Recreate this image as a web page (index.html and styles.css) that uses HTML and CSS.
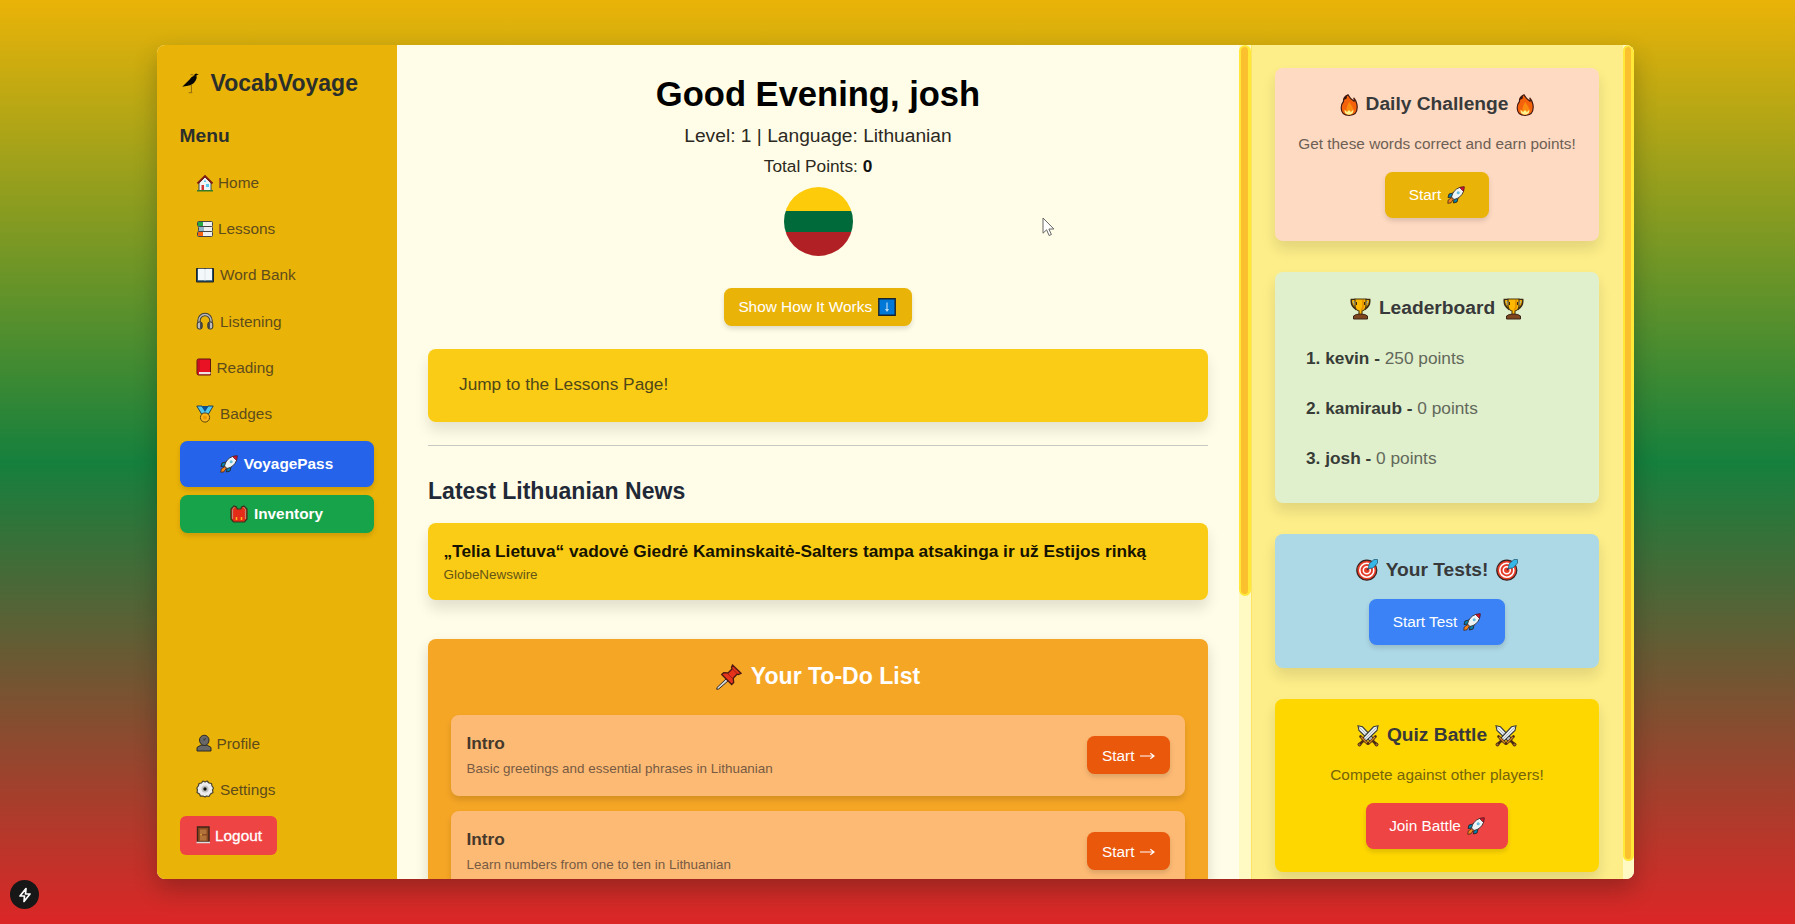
FILE: index.html
```html
<!DOCTYPE html>
<html lang="en">
<head>
<meta charset="utf-8">
<title>VocabVoyage</title>
<link rel="stylesheet" href="styles.css">
</head>
<body>
<svg class="defs" aria-hidden="true">
  <symbol id="bird" viewBox="0 0 18 24"><path d="M0 15 8 7q2-3 5-4 0-2 2-2.500l3 1-2.500 1q1 3-1 6-3 5-8.500 5.500z" fill="#080703"/><path d="M10 12v9m-3 .5h4M13 3q-2-2-4-1" fill="none" stroke="#74540b" stroke-width=".8"/></symbol>
  <symbol id="home" viewBox="0 0 18 18"><path d="M3 9v7.500h12V9L9 3z" fill="#eef4f5" stroke="#3d4a4d"/><path d="M1.500 9.500 9 2l7.500 7.500" fill="none" stroke="#7c1c14" stroke-width="1.800"/><path d="M5.500 11H8v5H5.500z" fill="#d13438"/><path d="M10 10h3v3h-3zM8 6.500h2V8H8z" fill="#57c7ee"/><path d="M1 16.800h16" stroke="#367c26" stroke-width="1.600"/></symbol>
  <symbol id="books" viewBox="0 0 18 18"><rect x="1.500" y="1.500" width="15" height="5" rx="1" fill="#eee" stroke="#444"/><path d="M2 2h5v4H2z" fill="#23a644"/><rect x="2.500" y="6.500" width="14" height="5" rx="1" fill="#eee" stroke="#444"/><path d="M3 7h5v4H3z" fill="#90b4c8"/><rect x="1.500" y="11.500" width="15" height="5" rx="1" fill="#eee" stroke="#444"/><path d="M2 12h5v4H2z" fill="#f7630c"/></symbol>
  <symbol id="open" viewBox="0 0 18 18"><path d="M.5 2.500h17v13.500H.5z" fill="#23506b" stroke="#222"/><path d="M2 2.800h6.500l.5.7.500-.7H16v11.500H9.500l-.5.7-.5-.7H2z" fill="#f3f8fb"/><path d="M9 4v10" stroke="#d5e1e8" stroke-width=".8"/></symbol>
  <symbol id="phones" viewBox="0 0 18 18"><path d="M3 12V8.500a6 6 0 0 1 12 0V12" fill="none" stroke="#413d35" stroke-width="3.400"/><path d="M3 12V8.500a6 6 0 0 1 12 0V12" fill="none" stroke="#bbb" stroke-width="1.400"/><rect x="1.200" y="10" width="5" height="7" rx="2" fill="#bcbcbc" stroke="#333"/><rect x="11.800" y="10" width="5" height="7" rx="2" fill="#bcbcbc" stroke="#333"/><path d="M5 10.500v6M13 10.500v6" stroke="#333" stroke-width="1.600"/></symbol>
  <symbol id="red" viewBox="0 0 18 18"><path d="M2.500 1h12v16h-12q-1.500 0-1.500-2V2.500Q1 1 2.500 1z" fill="#e81224" stroke="#5d1711"/><path d="M3 14h11.500v2.200H3z" fill="#eee4df"/><path d="M3 1.500v12" stroke="#a90e1c"/></symbol>
  <symbol id="medal" viewBox="0 0 18 18"><path d="M.8 1h5.200L9 5l3-4h5.200l-4.700 8h-7z" fill="#50c5ee" stroke="#29434e"/><path d="M5.500 1h7L9 7z" fill="#0b4f90"/><circle cx="9" cy="12.500" r="4.600" fill="#ffb51c" stroke="#5b4510"/><circle cx="9" cy="12.500" r="2" fill="#eb9a05"/></symbol>
  <symbol id="rocket" viewBox="0 0 18 18"><path d="M6 7 2 8 1 11.500l4-.5zM11 12l-1 4-3.500 1 .5-4z" fill="#0087b5" stroke="#252525" stroke-width=".9"/><path d="M5 11.500 1.200 14 .8 17.300 4 16.800 6.500 13z" fill="#f7831c" stroke="#4a2711" stroke-width=".8"/><path d="M4.500 11Q6 4 12.500 1.500L17 1l-.5 4.500Q14 12 7 13.500z" fill="#eef3f6" stroke="#333" stroke-width=".9"/><path d="m12.500 1.500 4.800-.8-.8 4.800z" fill="#d3132b" stroke="#5c1621" stroke-width=".7"/><circle cx="11.200" cy="6.800" r="1.500" fill="#64bede"/></symbol>
  <symbol id="pack" viewBox="0 0 18 18"><path d="M4 1 1 4v10l2.500 3h11L17 14V4l-3-3-2.500 1L10.800 4H7.200L6.500 2z" fill="#e52c18" stroke="#34351e" stroke-width="1.200"/><path d="M4.500 2 2.600 4.500V14M13.500 2l1.900 2.500V14" fill="none" stroke="#b9937c"/><path d="M6.500 12v3M11.500 12v3" stroke="#ffb51c" stroke-width="1.500"/></symbol>
  <symbol id="user" viewBox="0 0 18 18"><path d="M1 17v-3.500l4-2.500h6l4 2.500V17z" fill="#686868" stroke="#2b2922"/><path d="M3.500 6a4.700 4.700 0 0 1 9.500 0c0 3-2 5.500-4.500 5.500S3.500 9 3.500 6z" fill="#686868" stroke="#2b2922"/><path d="M8 4.500v2l2-2.500" fill="none" stroke="#333" stroke-width=".8"/></symbol>
  <symbol id="gear" viewBox="0 0 18 18"><path d="m7 1 2 1 2-1 2 2 2.500.5.5 2.500 1.500 2L16.500 10l.5 2.500-2.500 1.500-1.500 2.500-2.500-.5L9 17l-2-1-2.500.2L3.500 14 1 12.500 1.500 10 .8 8l1.500-2L3 3.500 5.500 3z" fill="#ececec" stroke="#48412b" stroke-width="1.200" stroke-linejoin="round"/><circle cx="9" cy="9" r="3.500" fill="#c2c2c2"/><circle cx="9" cy="9" r="1.700" fill="#16130a"/></symbol>
  <symbol id="door" viewBox="0 0 18 18"><path d="M1.500 1h11.500v15H1.500z" fill="#8e4a20" stroke="#3f2417" stroke-width="1.400"/><path d="M4 3.500h6.500V8H4zM4 9.500h6.500v5H4z" fill="#b27239"/><path d="M.5 16.500h13.500" stroke="#ddd" stroke-width="1.600"/><circle cx="5" cy="8.800" r=".8" fill="#ffc83d"/></symbol>
  <symbol id="down" viewBox="0 0 18 18"><path d="M.8.8h16.400v16.400H.8z" fill="#0078d7" stroke="#17232d" stroke-width="1.400"/><path d="M9 4.500v7M8 11.500l1 1.500 1-1.500z" fill="#b9d9f2" stroke="#b9d9f2" stroke-width="1.200"/></symbol>
  <symbol id="pin" viewBox="0 0 26 26"><path d="m10 15-9 8.500-.3 1.800 2-.3L12 17z" fill="#cfd5d8" stroke="#3b2a1d"/><path d="m16.500 1 8.500 8.300-2.500 1.200-1.500-.3-3.800 4 .5 4.300-2 2-10-10 2-1.800 4.300.3 4-4-.5-1.800z" fill="#e5341b" stroke="#4d1911" stroke-width="1.300"/><path d="m12 10 4.500 4.500M16.500 5l4.500 4.500" stroke="#9f2010"/></symbol>
  <symbol id="fire" viewBox="0 0 18 22"><path d="M8 .8q2 4 6 6.500.5-2-.3-3.500 3.500 4 3.500 9.500 0 8-8 8t-8-7.300q0-4 2.300-6.500Q3 3 8 .8z" fill="#f4620c" stroke="#451b12" stroke-width="1.200"/><path d="M9 8q4 4.500 4.500 8 0 4.700-4.500 4.700T4.300 16.500l1.800.5Q7 11 9 8z" fill="#fb8a10"/><path d="M4.500 15.500 7 18l2-2 2 2 2.500-2.500q0 5.200-4.500 5.200t-4.500-5.200z" fill="#fff18c"/><path d="m7 1.500-3 2-.3 2.500 3-1.500z" fill="#351410"/></symbol>
  <symbol id="cup" viewBox="0 0 20 22"><path d="M5 2H1.300q-.5 6 4.700 9M15 2h3.700q.5 6-4.700 9" fill="none" stroke="#3c2b10" stroke-width="2.600"/><path d="M5 2.500H1.800Q2 8 6 10M15 2.500h3.200Q18 8 14 10" fill="none" stroke="#ffb900" stroke-width="1"/><path d="M4.500 1h11v7q-.5 4-4 5v4h-3v-4q-3.500-1-4-5z" fill="#ffb900" stroke="#4a3410" stroke-width="1.100"/><path d="M12.500 2v7q-.5 2-2 3" stroke="#e08f00" fill="none" stroke-width="1.600"/><path d="M6 4v3M14 4v3" stroke="#3c2b10"/><path d="M3 18q2-2 7-2t7 2v3H3z" fill="#7f451e" stroke="#3b2617"/></symbol>
  <symbol id="target" viewBox="0 0 22 22"><circle cx="10.800" cy="11.200" r="10" fill="#e53c28" stroke="#38221e" stroke-width="1.200"/><circle cx="10.800" cy="11.200" r="7" fill="none" stroke="#fff" stroke-width="1.600"/><circle cx="10.800" cy="11.200" r="3.500" fill="#e53c28" stroke="#fff" stroke-width="1.500"/><path d="m11 11 3-3" stroke="#334" stroke-width="1.200"/><path d="m12.500 9.500.5-4.500 5-4.500h3.500V4L17 9z" fill="#35b7e8" stroke="#26617b" stroke-width=".8"/></symbol>
  <symbol id="swords" viewBox="0 0 22 22"><g id="sword"><path d="M1 .8 5.500 1.800 17 14l-3 3L2 5.500z" fill="#e9eef1" stroke="#383a38" stroke-width="1.100"/><path d="M2 2 15 15" stroke="#a3afb6" stroke-width=".8"/><path d="m11.500 18.500 7-7M16 16l3 3" stroke="#4a2b12" stroke-width="2.600" stroke-linecap="round"/><path d="m12 18 6-6" stroke="#d38424" stroke-width="1.200"/><circle cx="19.500" cy="19.500" r="1.500" fill="#b16d26" stroke="#3f2716"/></g><use href="#sword" transform="translate(22 0) scale(-1 1)"/></symbol>
</svg>

<div class="app">
  <nav class="sidebar">
    <div class="brand"><svg class="bird"><use href="#bird"/></svg><span>VocabVoyage</span></div>
    <h2 class="menu-title">Menu</h2>
    <div class="links">
      <a class="link mid"><svg class="em"><use href="#home"/></svg>Home</a>
      <a class="link mid"><svg class="em"><use href="#books"/></svg>Lessons</a>
      <a class="link"><svg class="em"><use href="#open"/></svg>Word Bank</a>
      <a class="link"><svg class="em"><use href="#phones"/></svg>Listening</a>
      <a class="link slim"><svg class="em"><use href="#red"/></svg>Reading</a>
      <a class="link"><svg class="em"><use href="#medal"/></svg>Badges</a>
      <a class="btn wide tall blue"><svg class="em"><use href="#rocket"/></svg>VoyagePass</a>
      <a class="btn wide green"><svg class="em"><use href="#pack"/></svg>Inventory</a>
    </div>
    <div class="links bottom">
      <a class="link slim"><svg class="em"><use href="#user"/></svg>Profile</a>
      <a class="link"><svg class="em"><use href="#gear"/></svg>Settings</a>
      <a class="link logout"><svg class="em"><use href="#door"/></svg>Logout</a>
    </div>
  </nav>

  <main class="main">
    <header class="hero">
      <h1>Good Evening, josh</h1>
      <p class="level">Level: 1 | Language: Lithuanian</p>
      <p class="points">Total Points: <b>0</b></p>
      <div class="flag"></div>
      <a class="btn how">Show How It Works <svg class="em"><use href="#down"/></svg></a>
    </header>
    <div class="jump">Jump to the Lessons Page!</div>
    <hr>
    <h2 class="news-title">Latest Lithuanian News</h2>
    <article class="news">
      <h3>„Telia Lietuva“ vadovė Giedrė Kaminskaitė-Salters tampa atsakinga ir už Estijos rinką</h3>
      <p>GlobeNewswire</p>
    </article>
    <section class="todo">
      <h2><svg class="pin"><use href="#pin"/></svg>Your To-Do List</h2>
      <div class="task">
        <div><h3>Intro</h3><p>Basic greetings and essential phrases in Lithuanian</p></div>
        <a class="btn go">Start <svg class="arrow" viewBox="0 0 16 10"><path d="M0 5h14.500M11 2l4 3-4 3"/></svg></a>
      </div>
      <div class="task">
        <div><h3>Intro</h3><p>Learn numbers from one to ten in Lithuanian</p></div>
        <a class="btn go">Start <svg class="arrow" viewBox="0 0 16 10"><path d="M0 5h14.500M11 2l4 3-4 3"/></svg></a>
      </div>
    </section>
  </main>
  <div class="track"><div class="thumb half"></div></div>

  <aside class="panel">
    <section class="card peach">
      <h2><svg class="fire"><use href="#fire"/></svg>Daily Challenge<svg class="fire"><use href="#fire"/></svg></h2>
      <p>Get these words correct and earn points!</p>
      <a class="btn tall gold">Start <svg class="em"><use href="#rocket"/></svg></a>
    </section>
    <section class="card mint">
      <h2><svg class="cup"><use href="#cup"/></svg>Leaderboard<svg class="cup"><use href="#cup"/></svg></h2>
      <ol>
        <li><b>1. kevin -</b> 250 points</li>
        <li><b>2. kamiraub -</b> 0 points</li>
        <li><b>3. josh -</b> 0 points</li>
      </ol>
    </section>
    <section class="card sky">
      <h2><svg class="big"><use href="#target"/></svg>Your Tests!<svg class="big"><use href="#target"/></svg></h2>
      <a class="btn tall azure">Start Test <svg class="em"><use href="#rocket"/></svg></a>
    </section>
    <section class="card sun">
      <h2><svg class="big"><use href="#swords"/></svg>Quiz Battle<svg class="big"><use href="#swords"/></svg></h2>
      <p>Compete against other players!</p>
      <a class="btn tall coral">Join Battle <svg class="em"><use href="#rocket"/></svg></a>
    </section>
  </aside>
  <div class="track"><div class="thumb full"></div></div>
</div>

<svg class="cursor" viewBox="0 0 13 20"><path d="M1 1v15.200l3.600-3.400 2.500 5.700 2.300-1-2.500-5.500h5z"/></svg>
<div class="dev"><svg viewBox="0 0 16 16"><path d="M9 1.500 3 9h4.500L7 14.500 13 7H8.500z"/></svg></div>
</body>
</html>
```
FILE: styles.css
```css
* { box-sizing: border-box; margin: 0; padding: 0; }
html { font-size: 15.360px; }
body {
  height: 924px;
  overflow: hidden;
  padding: 45px 161px 45.500px 156.500px;
  background: linear-gradient(#eab308, #15803d 50%, #dc2626);
  font-family: "Liberation Sans", Arial, sans-serif;
  line-height: 1.5;
}
.defs { position: absolute; width: 0; height: 0; }
svg { flex: none; display: block; }
.app {
  display: flex;
  width: 1477.500px;
  height: 833.500px;
  overflow: hidden;
  border-radius: 8px;
  background: #fffde7;
  box-shadow: 0 10px 24px rgba(0, 0, 0, .24);
}

.sidebar {
  flex: 0 0 240.500px;
  display: flex;
  flex-direction: column;
  padding: 22.500px 23px 24px;
  background: #eab308;
  color: #2b2f2c;
}
.brand { display: flex; align-items: center; height: 32px; font-size: 23px; font-weight: 700; }
.bird { width: 17px; height: 22px; margin: 0 12px 0 2px; }
.menu-title { height: 29px; margin: 21px 0 14px; font-size: 19.200px; line-height: 29px; }
.links { display: flex; flex-direction: column; gap: 8px; }
.bottom { margin-top: auto; align-items: flex-start; }
.link {
  display: flex;
  align-items: center;
  height: 38.200px;
  padding: 0 15.300px 0 16px;
  font-size: 1rem;
  color: #5f4c1b;
}
.em { width: 18px; height: 18px; }
.link .em { margin-right: 6.500px; }
.mid .em { margin-right: 4.500px; }
.slim .em { margin-right: 3px; }
.logout { border-radius: 6px; background: #ef4444; color: #fff; -webkit-text-stroke: .3px #fff; }
.logout .em { margin-right: 1.500px; }

.btn {
  display: flex;
  align-items: center;
  justify-content: center;
  gap: 6px;
  width: max-content;
  height: 38px;
  border-radius: 7.500px;
  color: #fff;
  font-size: 1rem;
  box-shadow: 0 3px 5px rgba(0, 0, 0, .13);
  white-space: nowrap;
}
.tall { height: 46px; padding: 0 23.500px; }
.wide { width: 194px; font-weight: 700; }
.blue { background: #2563eb; }
.green { background: #16a34a; }
.how { padding: 0 16px 0 14.500px; background: #eab308; }
.gold { background: #eab308; }
.azure { background: #3b82f6; }
.coral { background: #ef4444; }

.main { flex: 0 0 842px; padding: 23px 31px 0 31px; overflow: hidden; }
.hero { display: flex; flex-direction: column; align-items: center; color: #2b2922; }
.hero h1 { height: 52px; font-size: 34.560px; line-height: 52px; color: #000; }
.level { height: 30px; font-size: 19.200px; line-height: 31px; }
.points { height: 32px; font-size: 17.280px; line-height: 33px; }
.points b { color: #111; }
.flag {
  width: 69px;
  height: 69px;
  margin: 5px 0 31.500px;
  border-radius: 50%;
  background: linear-gradient(#fecb0a 0 34.500%, #006a3a 34.500% 65.500%, #b02025 65.500%);
}
.jump {
  height: 72.500px;
  margin-top: 23.500px;
  padding-left: 31px;
  border-radius: 8px;
  background: #facc15;
  color: #4f4718;
  font-size: 17.280px;
  line-height: 71px;
  box-shadow: 0 9px 14px rgba(0, 0, 0, .1);
}
hr { height: 1.500px; margin: 23px 0 22px; border: 0; background: #c7c8c2; }
.news-title { height: 46px; font-size: 23.040px; line-height: 46px; color: #1f2937; }
.news {
  height: 76.500px;
  margin-top: 9px;
  padding: 14.500px 15.500px;
  border-radius: 8px;
  background: #facc15;
  box-shadow: 0 9px 14px rgba(0, 0, 0, .11);
}
.news h3 { height: 26px; font-size: 17.300px; line-height: 26px; color: #151200; white-space: nowrap; }
.news p { font-size: 13.440px; line-height: 21px; color: #655514; }
.todo {
  height: 300px;
  margin-top: 39px;
  padding: 22px 23px;
  border-radius: 8px;
  background: #f6a625;
  box-shadow: 0 6px 14px rgba(0, 0, 0, .14);
}
.todo h2 { display: flex; align-items: center; justify-content: center; gap: 9px; height: 32px; margin-bottom: 22.500px; font-size: 23.040px; color: #fff; }
.pin { width: 26px; height: 26px; }
.task {
  display: flex;
  align-items: center;
  justify-content: space-between;
  height: 80.700px;
  margin-bottom: 15.300px;
  padding: 0 15.500px;
  border-radius: 8px;
  background: #fdba74;
  box-shadow: 0 4px 6px rgba(0, 0, 0, .13);
}
.task h3 { height: 27px; font-size: 17.280px; line-height: 26px; color: #46382a; }
.task p { font-size: 13.440px; line-height: 23px; color: #775a43; }
.go { gap: 5px; padding: 0 15px; background: #ea580c; }
.arrow { width: 15px; height: 10px; margin-top: 2px; fill: none; stroke: #fff; stroke-width: 1.200; }

.track { flex: 0 0 11.500px; background: #fff9c4; }
.thumb { border: 2.500px solid #ffe838; border-radius: 6px; background: #fbc02d; border-right-width: 3px; }
.half { height: 551px; }
.full { height: 816px; }

.panel { flex: 1; height: 100%; overflow: hidden; padding: 23px 23.500px 0 23.500px; border-left: 1px solid #fbe464; background: #fdee89; }
.card {
  display: flex;
  flex-direction: column;
  align-items: center;
  height: 173px;
  margin-bottom: 31px;
  padding-top: 22px;
  border-radius: 8px;
  box-shadow: 0 8px 14px rgba(0, 0, 0, .11);
}
.card h2 { display: flex; align-items: center; gap: 8px; height: 29px; font-size: 19.200px; color: #38393a; }
.card p { height: 52.500px; font-size: 1rem; line-height: 50px; color: #6d5f55; }
.peach { background: #fedac2; }
.mint { height: 230.500px; background: #e1f0cc; }
.sky { height: 134.500px; background: #add8e6; }
.sky h2 { margin-bottom: 14px; }
.sun { margin-bottom: 0; background: #ffd700; }
.sun p { color: #75640b; }
.fire { width: 18px; height: 22px; }
.cup { width: 21px; height: 22px; }
.big { width: 22px; height: 22px; }
.card ol { align-self: stretch; padding: 10px 31px; list-style: none; }
.card li { height: 50px; font-size: 17.280px; line-height: 50px; color: #62685b; }
.card li b { color: #373c37; }

.cursor { position: absolute; left: 1042px; top: 217px; width: 13px; height: 20px; fill: #fff; stroke: #666; stroke-width: 1; }
.dev {
  position: absolute;
  left: 10px;
  top: 880px;
  display: grid;
  place-items: center;
  width: 29px;
  height: 29px;
  border-radius: 50%;
  background: #171717;
}
.dev svg { width: 16px; height: 16px; fill: none; stroke: #fff; stroke-width: 1.700; stroke-linejoin: round; }
```
